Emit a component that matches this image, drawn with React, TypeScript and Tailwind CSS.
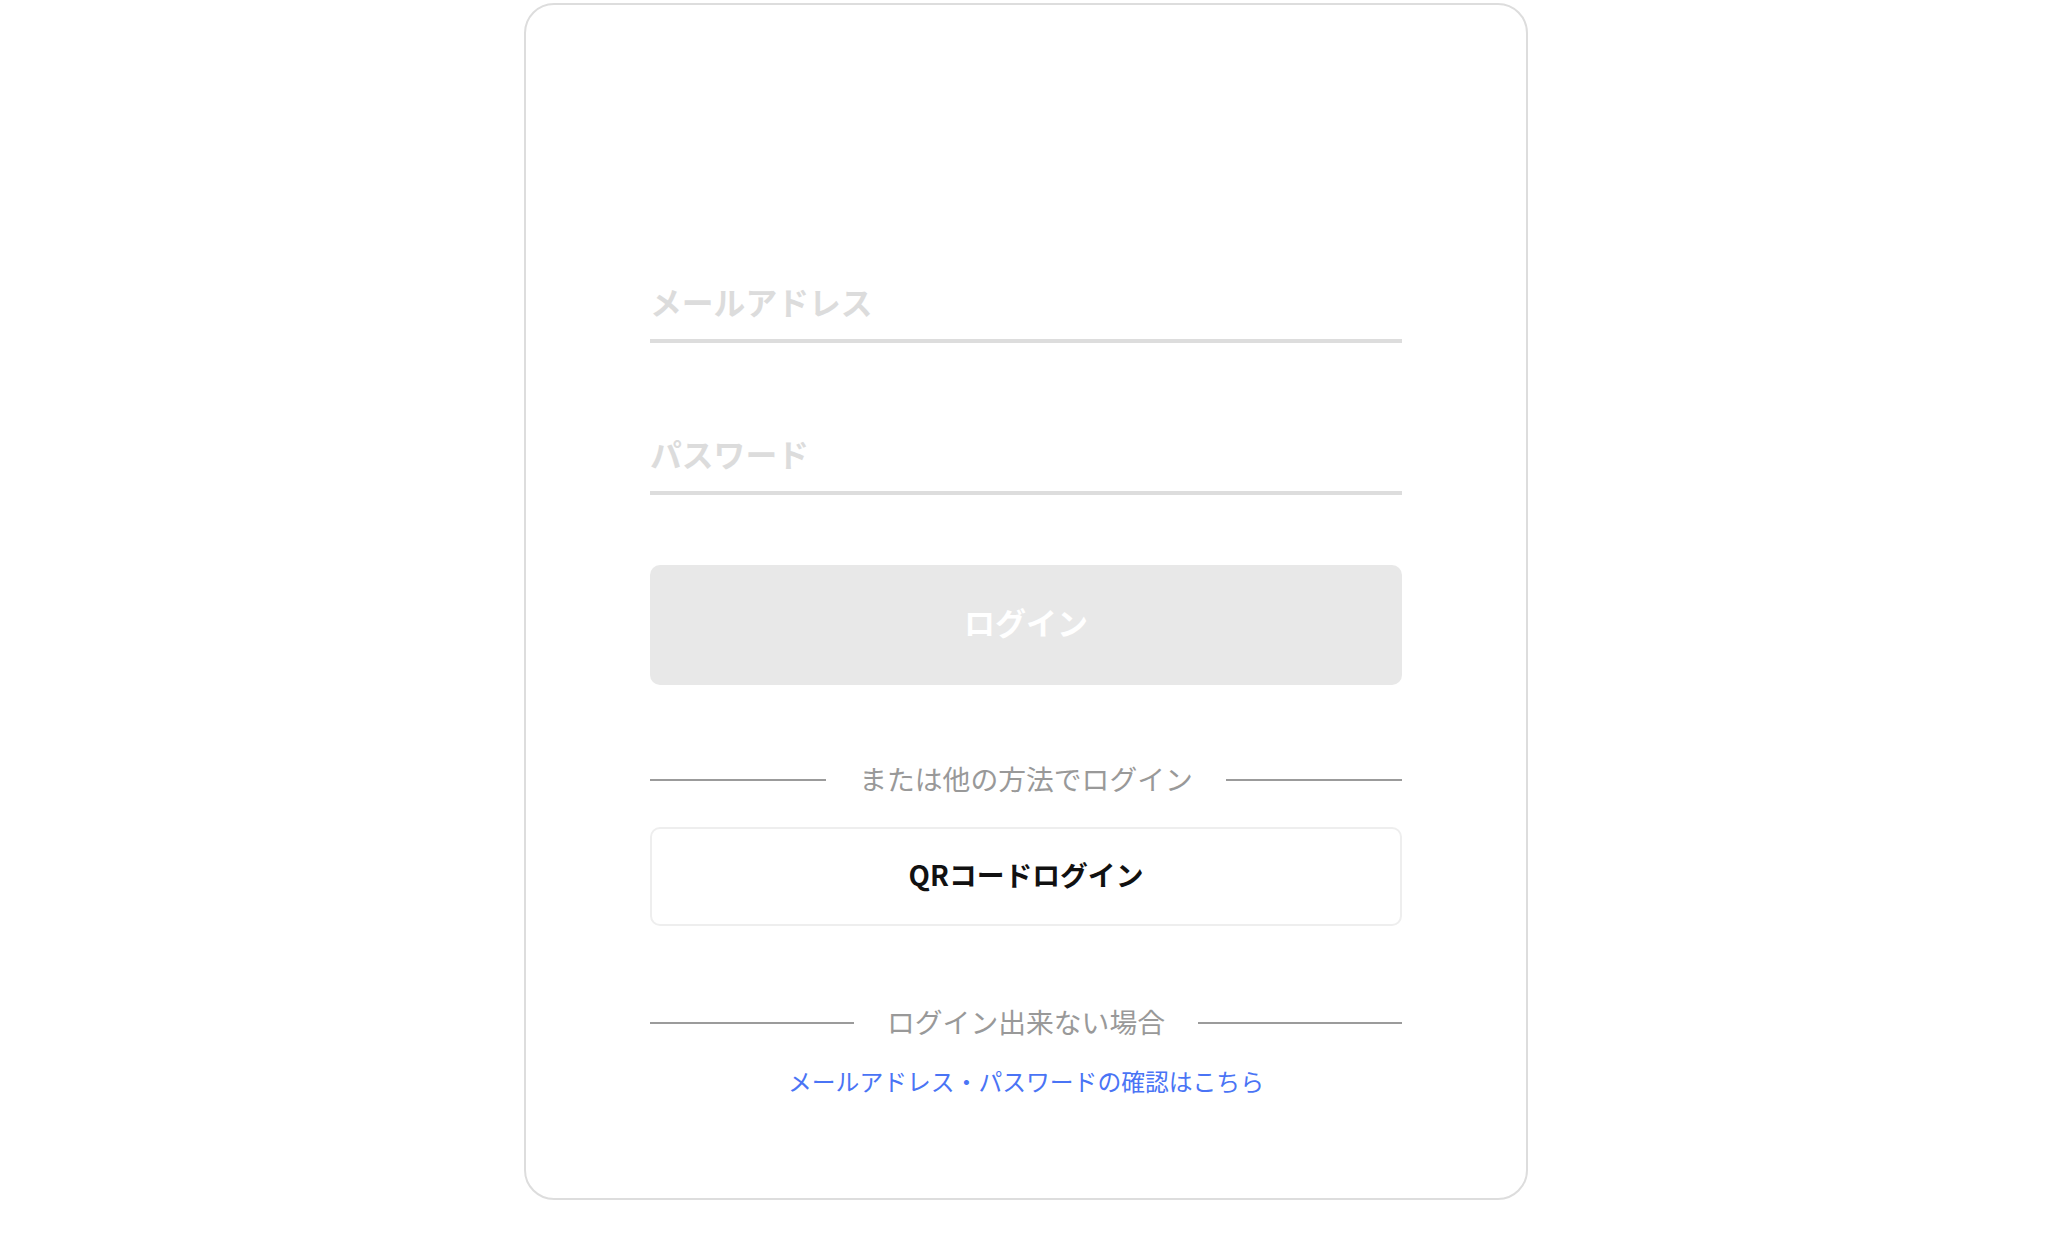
import React from "react";

const font = { fontFamily: '"Noto Sans CJK JP", "Noto Sans", sans-serif' };

function Divider({ label }: { label: string }) {
  return (
    <div className="flex items-center h-[40px] gap-[33px]">
      <div className="flex-1 h-[2px] bg-[#9b9b9b]" />
      <span className="text-[27.8px] leading-[40px] pb-[4px] text-[#999999] whitespace-nowrap">{label}</span>
      <div className="flex-1 h-[2px] bg-[#9b9b9b]" />
    </div>
  );
}

export default function App() {
  return (
    <div className="w-full min-h-[1240px] bg-white flex justify-center pt-[3px] pl-[4px]" style={font}>
      <div className="w-[1004px] h-[1197px] border-2 border-[#dddddd] rounded-[30px] px-[124px] flex flex-col">
        <div className="mt-[275px] pb-[11px] border-b-4 border-[#dddddd]">
          <input
            type="text"
            placeholder="メールアドレス"
            className="w-full h-[48px] pb-[7px] bg-transparent outline-none text-[31.8px] font-bold text-[#333] placeholder:text-[#dcdcdc]"
            style={font}
          />
        </div>
        <div className="mt-[89px] pb-[11px] border-b-4 border-[#dddddd]">
          <input
            type="password"
            placeholder="パスワード"
            className="w-full h-[48px] pb-[7px] bg-transparent outline-none text-[31.8px] font-bold text-[#333] placeholder:text-[#dcdcdc]"
            style={font}
          />
        </div>
        <button
          className="mt-[70px] h-[120px] w-full rounded-[10px] bg-[#e8e8e8] text-white text-[31px] font-bold flex items-center justify-center pb-[5px]"
          style={font}
        >
          ログイン
        </button>
        <div className="mt-[75px]">
          <Divider label="または他の方法でログイン" />
        </div>
        <button
          className="mt-[27px] h-[99px] w-full rounded-[10px] border-2 border-[#eeeeee] bg-white text-[#111111] text-[27.8px] font-bold flex items-center justify-center pb-[3px]"
          style={font}
        >
          QRコードログイン
        </button>
        <div className="mt-[77px]">
          <Divider label="ログイン出来ない場合" />
        </div>
        <div className="mt-[18px] text-center leading-[40px]">
          <a href="#" className="text-[23.8px] text-[#4a74f5]">
            メールアドレス・パスワードの確認はこちら
          </a>
        </div>
      </div>
    </div>
  );
}
